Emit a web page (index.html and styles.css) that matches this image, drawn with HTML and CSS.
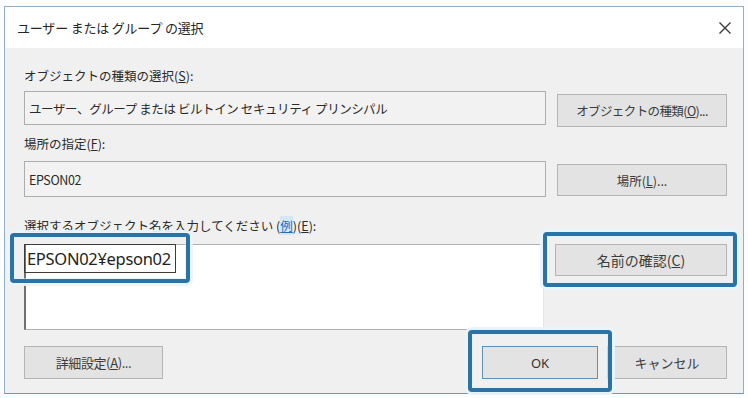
FILE: index.html
```html
<!DOCTYPE html>
<html lang="ja">
<head>
<meta charset="utf-8">
<title>ユーザー または グループ の選択</title>
<link rel="stylesheet" href="styles.css">
</head>
<body>
<div class="window">
  <div class="titlebar">
    <span class="title">ユーザー または グループ の選択</span>
    <svg class="close" width="14" height="14" viewBox="0 0 14 14"><path d="M1.5 1.5 L12.5 12.5 M12.5 1.5 L1.5 12.5" stroke="#3a3a3a" stroke-width="1.4" fill="none"/></svg>
  </div>
  <div class="content">
    <div class="label l1">オブジェクトの種類の選択(<u>S</u>):</div>
    <div class="row r1">
      <div class="field">ユーザー、グループ または ビルトイン セキュリティ プリンシパル</div>
      <div class="btn b1">オブジェクトの種類(<u>O</u>)...</div>
    </div>
    <div class="label l2">場所の指定(<u>F</u>):</div>
    <div class="row r2">
      <div class="field">EPSON02</div>
      <div class="btn b2">場所(<u>L</u>)...</div>
    </div>
    <div class="label l3">選択するオブジェクト名を入力してください (<span class="link">例</span>)(<u>E</u>):</div>
    <div class="row r3">
      <div class="textarea"><span class="entry">EPSON02¥epson02</span></div>
      <div class="btn b3">名前の確認(<u>C</u>)</div>
    </div>
    <div class="row r4">
      <div class="btn b4">詳細設定(<u>A</u>)...</div>
      <div class="spacer"></div>
      <div class="btn b5">OK</div>
      <div class="btn b6">キャンセル</div>
    </div>
  </div>
</div>
<div class="hl hl1"></div>
<div class="hl hl2"></div>
<div class="hl hl3"></div>
</body>
</html>
```
FILE: styles.css
```css
html, body {
  margin: 0;
  padding: 0;
  background: #fbfdfe;
}
body {
  width: 748px;
  height: 398px;
  overflow: hidden;
  font-family: "Noto Sans CJK JP", "Noto Sans", sans-serif;
  color: #2a2a2a;
}
.window {
  margin: 6px 0 0 4px;
  width: 740px;
  height: 388px;
  box-sizing: border-box;
  border: 1px solid #8fb0c6;
  border-bottom-color: #6e98b8;
  display: flex;
  flex-direction: column;
  background: #f0f0f0;
}
.titlebar {
  height: 41px;
  flex: none;
  background: #fff;
  display: flex;
  align-items: center;
  padding: 0 11px 0 12px;
}
.title {
  flex: 1;
  font-size: 13px;
  color: #262626;
  letter-spacing: -0.2px;
}
.close {
  display: block;
}
.content {
  flex: 1;
  padding: 19px 16px 0 19px;
  display: flex;
  flex-direction: column;
}
.label {
  height: 18px;
  line-height: 18px;
  font-size: 12.5px;
  color: #2a2a2a;
}
.l1 { margin-bottom: 6px; }
.l2 { margin-top: 8px; margin-bottom: 8px; }
.l3 { margin-top: 20px; margin-bottom: 9px; }
.row {
  display: flex;
  gap: 11px;
}
.field {
  flex: 1;
  box-sizing: border-box;
  border: 1px solid #adadad;
  background: #f2f2f2;
  font-size: 12.5px;
  letter-spacing: -0.4px;
  padding-left: 4px;
  display: flex;
  align-items: center;
  color: #2a2a2a;
}
.r1 .field { height: 34px; }
.r2 .field { height: 36px; }
.btn {
  box-sizing: border-box;
  border: 1px solid #b4b4b4;
  background: #e3e3e3;
  display: flex;
  align-items: center;
  justify-content: center;
  font-size: 12.5px;
  color: #3c3c3c;
  flex: none;
}
.b1 { width: 170px; height: 33px; margin-top: 3px; letter-spacing: -0.6px; }
.b2 { width: 170px; height: 32px; margin-top: 3px; }
.b3 { width: 172px; height: 32px; font-size: 14px; }
.textarea {
  flex: 1;
  height: 86px;
  box-sizing: border-box;
  background: #fff;
  border: 1px solid #b0b0b0;
  border-left: 2px solid #707070;
  border-right-color: #e6e6e6;
}
.entry {
  display: inline-block;
  margin: -1px 0 0 -2px;
  width: 152px;
  height: 29px;
  box-sizing: border-box;
  border: 1px solid #3c3c3c;
  font-family: "Noto Sans", sans-serif;
  font-size: 16.5px;
  line-height: 27px;
  padding-left: 2px;
  color: #222;
  letter-spacing: -0.3px;
  white-space: nowrap;
  overflow: hidden;
}
.r4 {
  margin-top: 16px;
  gap: 9px;
}
.spacer { flex: 1; }
.b4 { width: 139px; height: 33px; font-size: 13px; letter-spacing: -0.4px; }
.b5 { width: 116px; height: 33px; border-color: #5f8fb4; font-family: "Noto Sans", sans-serif; font-size: 13px; color: #333; }
.b6 { width: 120px; height: 33px; font-size: 13px; }
.link {
  color: #1d6fc2;
  text-decoration: underline;
  background: #d4e7f7;
}
.hl {
  position: absolute;
  box-sizing: border-box;
  border: 4px solid #2b73a5;
  border-radius: 4px;
  box-shadow: 0 0 0 3px rgba(232, 244, 252, 0.95), inset 0 0 0 1px rgba(220, 238, 250, 0.6);
}
.hl1 { left: 10px; top: 233px; width: 180px; height: 50px; }
.hl2 { left: 543px; top: 232px; width: 194px; height: 55px; }
.hl3 { left: 468px; top: 330px; width: 144px; height: 62px; }
```
